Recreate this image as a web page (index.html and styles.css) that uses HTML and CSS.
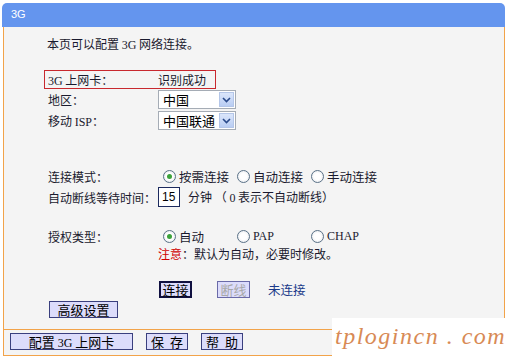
FILE: index.html
```html
<!DOCTYPE html>
<html>
<head>
<meta charset="utf-8">
<link rel="stylesheet" href="styles.css">
</head>
<body>
<div class="page">
  <div class="header">3G</div>
  <div class="frame">
    <div class="main">
      <div class="intro">本页可以配置 <span class="lat">3G</span> 网络连接。</div>
      <div class="card">
        <span class="label"><span class="lat">3G</span> 上网卡：</span>
        <span>识别成功</span>
      </div>
      <div class="row">
        <span class="label">地区：</span>
        <span class="select"><span class="sel-text">中国</span><span class="sel-btn"><svg width="9" height="6" viewBox="0 0 9 6"><path d="M1 1 L4.5 4.5 L8 1" fill="none" stroke="#2a4a8a" stroke-width="1.6"/></svg></span></span>
      </div>
      <div class="row">
        <span class="label">移动 <span class="lat">ISP</span>：</span>
        <span class="select"><span class="sel-text">中国联通</span><span class="sel-btn"><svg width="9" height="6" viewBox="0 0 9 6"><path d="M1 1 L4.5 4.5 L8 1" fill="none" stroke="#2a4a8a" stroke-width="1.6"/></svg></span></span>
      </div>
      <div class="row mode">
        <span class="label">连接模式：</span>
        <span class="radios">
          <span class="opt w1"><span class="radio on"></span>按需连接</span>
          <span class="opt w1"><span class="radio"></span>自动连接</span>
          <span class="opt"><span class="radio"></span>手动连接</span>
        </span>
      </div>
      <div class="row wait">
        <span class="label">自动断线等待时间：</span>
        <span class="input">15</span>
        <span class="unit">分钟 （ <span class="lat">0</span> 表示不自动断线）</span>
      </div>
      <div class="row auth">
        <span class="label">授权类型：</span>
        <span class="radios">
          <span class="opt w1"><span class="radio on"></span>自动</span>
          <span class="opt w1"><span class="radio"></span><span class="lat">PAP</span></span>
          <span class="opt"><span class="radio"></span><span class="lat">CHAP</span></span>
        </span>
      </div>
      <div class="row note">
        <span class="label"></span>
        <span><span class="red">注意</span>：默认为自动，必要时修改。</span>
      </div>
      <div class="actions">
        <span class="btn primary"><span>连接</span></span>
        <span class="btn disabled"><span>断线</span></span>
        <span class="status">未连接</span>
      </div>
      <div class="adv"><span class="btn wide"><span>高级设置</span></span></div>
    </div>
    <div class="footer">
      <span class="btn fb1"><span>配置 <span class="lat">3G</span> 上网卡</span></span>
      <span class="btn fb2"><span class="sp">保</span><span>存</span></span>
      <span class="btn fb2"><span class="sp">帮</span><span>助</span></span>
    </div>
  </div>
  <div class="watermark">tplogincn . com</div>
</div>
</body>
</html>
```
FILE: styles.css
```css
html, body {
  margin: 0;
  padding: 0;
  background: #ffffff;
}
body {
  font-family: "Noto Sans CJK SC", "Liberation Sans", sans-serif;
  font-size: 12px;
  color: #1a1a2e;
}
.page {
  position: relative;
  width: 507px;
  height: 358px;
  padding: 3px 0 0 2px;
  box-sizing: border-box;
  overflow: hidden;
}
.lat {
  font-family: "Liberation Serif", serif;
  font-size: 12px;
}
.header {
  width: 503px;
  height: 24px;
  box-sizing: border-box;
  background: #6495ee;
  border-radius: 5px 5px 0 0;
  color: #ffffff;
  font-family: "Liberation Sans", sans-serif;
  font-size: 11px;
  line-height: 22px;
  padding-left: 9px;
}
.frame {
  margin-left: 1px;
  width: 502px;
  box-sizing: border-box;
  border: 1px solid #f2a349;
  border-top: none;
  background: #f4f4f4;
}
.main {
  padding: 9px 0 11px 0;
  border-bottom: 1px solid #f2a349;
}
.intro {
  padding-left: 43px;
  line-height: 16px;
}
.card {
  margin: 17px 0 0 40px;
  width: 172px;
  height: 19px;
  box-sizing: border-box;
  border: 1px solid #c8282e;
  padding-left: 3px;
  display: flex;
  align-items: center;
}
.label {
  display: inline-block;
  width: 110px;
  flex: none;
}
.row {
  display: flex;
  align-items: center;
  padding-left: 44px;
  height: 21px;
}
.select {
  display: flex;
  width: 78px;
  height: 19px;
  box-sizing: border-box;
  border: 1px solid #a5acb5;
  background: #ffffff;
}
.sel-text {
  flex: 1;
  font-size: 13px;
  line-height: 17px;
  padding-left: 4px;
  color: #000;
  white-space: nowrap;
}
.sel-btn {
  width: 15px;
  margin: 1px;
  display: flex;
  align-items: center;
  justify-content: center;
  background: linear-gradient(#dbe6fb, #b9cdf3);
  border: 1px solid #b4c6e8;
  box-sizing: border-box;
  flex: none;
}
.mode {
  margin-top: 37px;
  height: 17px;
}
.radios {
  display: flex;
  align-items: center;
  margin-left: 5px;
}
.opt {
  display: flex;
  align-items: center;
  font-size: 12.5px;
}
.w1 {
  width: 74px;
}
.radio {
  width: 11px;
  height: 11px;
  border: 1px solid #5a7187;
  border-radius: 50%;
  background: radial-gradient(circle, #ffffff 40%, #dfe3e8 100%);
  margin-right: 3px;
  position: relative;
  flex: none;
}
.radio.on::after {
  content: "";
  position: absolute;
  left: 3px;
  top: 3px;
  width: 5px;
  height: 5px;
  border-radius: 50%;
  background: #3ca23c;
}
.wait {
  margin-top: 1px;
  height: 22px;
}
.input {
  width: 22px;
  height: 20px;
  box-sizing: border-box;
  border: 1px solid #1c2a5e;
  background: #fff;
  font-family: "Liberation Sans", sans-serif;
  font-size: 12px;
  line-height: 18px;
  padding-left: 3px;
  color: #000;
}
.unit {
  margin-left: 8px;
  white-space: pre;
}
.auth {
  margin-top: 20px;
  height: 17px;
}
.note {
  height: 16px;
}
.red {
  color: #d00000;
}
.actions {
  margin-top: 20px;
  display: flex;
  align-items: center;
  padding-left: 155px;
  height: 17px;
}
.btn {
  display: inline-flex;
  align-items: center;
  justify-content: center;
  box-sizing: border-box;
  height: 17px;
  background: #dcdcfb;
  border: 1px solid #3a3f7e;
  font-size: 13px;
  color: #000;
  white-space: nowrap;
}
.primary {
  width: 33px;
  border: 2px solid #101040;
}
.disabled {
  width: 33px;
  margin-left: 25px;
  color: #a8a8a8;
  border-color: #6a6aa8;
}
.status {
  margin-left: 18px;
  color: #1a3a8a;
  font-size: 12.5px;
}
.adv {
  margin-top: 3px;
  padding-left: 45px;
  display: flex;
}
.wide {
  width: 69px;
}
.footer {
  height: 25px;
  box-sizing: border-box;
  padding: 3px 0 0 6px;
  display: flex;
  align-items: flex-start;
}
.fb1 {
  width: 123px;
}
.fb2 {
  width: 42px;
  margin-left: 13px;
}
.sp {
  margin-right: 6px;
}
.watermark {
  position: absolute;
  left: 332px;
  top: 318px;
  width: 175px;
  height: 40px;
  background: #ffffff;
  color: #d88a55;
  font-family: "Liberation Serif", serif;
  font-style: italic;
  font-size: 24px;
  line-height: 36px;
  padding-left: 3px;
  box-sizing: border-box;
  white-space: nowrap;
  letter-spacing: 1.5px;
}
```
